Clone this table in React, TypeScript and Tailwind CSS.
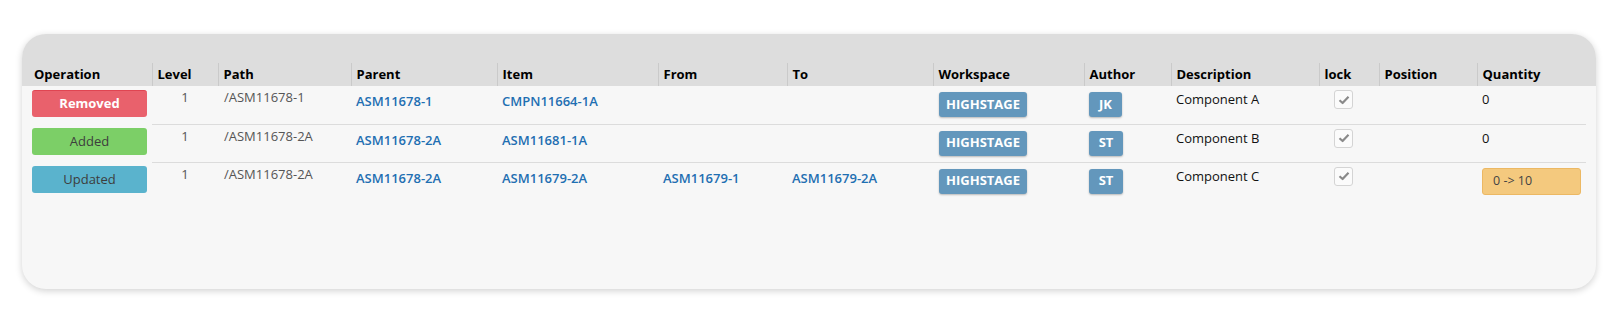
import React from "react";

type Row = {
  op: "Removed" | "Added" | "Updated";
  path: string;
  parent: string;
  item: string;
  from?: string;
  to?: string;
  author: string;
  description: string;
  quantity: string;
  changed?: boolean;
};

const rows: Row[] = [
  { op: "Removed", path: "/ASM11678-1", parent: "ASM11678-1", item: "CMPN11664-1A", author: "JK", description: "Component A", quantity: "0" },
  { op: "Added", path: "/ASM11678-2A", parent: "ASM11678-2A", item: "ASM11681-1A", author: "ST", description: "Component B", quantity: "0" },
  {
    op: "Updated",
    path: "/ASM11678-2A",
    parent: "ASM11678-2A",
    item: "ASM11679-2A",
    from: "ASM11679-1",
    to: "ASM11679-2A",
    author: "ST",
    description: "Component C",
    quantity: "0 -> 10",
    changed: true,
  },
];

const opStyles: Record<Row["op"], string> = {
  Removed: "bg-[#e9616c] border-t border-[#e04552] text-white font-bold",
  Added: "bg-[#7ccf67] text-[#3d3d3d]",
  Updated: "bg-[#5ab3cd] text-[#3d3d3d]",
};

const headers = [
  { label: "Operation", w: "w-[124px]", first: true },
  { label: "Level", w: "w-[66px]" },
  { label: "Path", w: "w-[133px]" },
  { label: "Parent", w: "w-[146px]" },
  { label: "Item", w: "w-[161px]" },
  { label: "From", w: "w-[129px]" },
  { label: "To", w: "w-[146px]" },
  { label: "Workspace", w: "w-[151px]" },
  { label: "Author", w: "w-[87px]" },
  { label: "Description", w: "w-[148px]" },
  { label: "lock", w: "w-[60px]" },
  { label: "Position", w: "w-[98px]" },
  { label: "Quantity", w: "w-[109px]" },
];

function Check() {
  return (
    <div className="w-[19px] h-[19px] rounded-[3px] border border-[#d4d4d4] bg-[#fbfbfb] flex items-center justify-center">
      <svg width="12" height="10" viewBox="0 0 12 10">
        <path d="M1.5 5.2 L4.6 8 L10.5 1.8" fill="none" stroke="#8a8a8a" strokeWidth="2.2" strokeLinejoin="round" />
      </svg>
    </div>
  );
}

function Badge({ children, w }: { children: React.ReactNode; w: string }) {
  return (
    <div
      className={`${w} h-[25px] rounded-[3px] bg-[#6397bc] text-white font-bold text-[13px] flex items-center justify-center shadow-[0_1px_2px_rgba(0,0,0,0.25)]`}
    >
      {children}
    </div>
  );
}

export default function App() {
  return (
    <div className="w-[1614px] h-[334px] bg-white pt-[34px] pl-[22px] font-['Open_Sans','Noto_Sans',sans-serif] text-[13px]">
      <div className="w-[1574px] h-[255px] rounded-[24px] bg-[#f7f7f7] overflow-hidden shadow-[0_2px_7px_rgba(0,0,0,0.18)]">
        <div className="bg-[#dddddd] pt-[29px] pl-[6px]">
          <table className="table-fixed border-collapse w-[1558px]">
            <thead>
              <tr className="h-[23px]">
                {headers.map((h) => (
                  <th
                    key={h.label}
                    className={`${h.w} p-0 text-left align-top font-bold text-black leading-[22px] ${
                      h.first ? "pl-[6px]" : "pl-[5px] border-l border-[#cacaca]"
                    }`}
                  >
                    {h.label}
                  </th>
                ))}
              </tr>
            </thead>
          </table>
        </div>
        <div className="pl-[6px]">
          <table className="table-fixed border-collapse w-[1558px]">
            <colgroup>
              {headers.map((h) => (
                <col key={h.label} className={h.w} />
              ))}
            </colgroup>
            <tbody>
              {rows.map((r, i) => (
                <tr key={i} className="h-[38px] align-top">
                  <td className="p-0 pl-[4px] pt-[4px]">
                    <div className={`w-[115px] h-[27px] rounded-[3px] flex items-center justify-center text-[13px] ${opStyles[r.op]}`}>
                      {r.op}
                    </div>
                  </td>
                  <td className={`p-0 pt-[2px] text-center text-[#555] ${i > 0 ? "border-t border-[#dcdcdc]" : ""}`}>1</td>
                  <td className={`p-0 pt-[2px] pl-[6px] text-[#555] ${i > 0 ? "border-t border-[#dcdcdc]" : ""}`}>{r.path}</td>
                  <td className={`p-0 pt-[6px] pl-[5px] font-semibold text-[#1f6fb2] ${i > 0 ? "border-t border-[#dcdcdc]" : ""}`}>{r.parent}</td>
                  <td className={`p-0 pt-[6px] pl-[5px] font-semibold text-[#1f6fb2] ${i > 0 ? "border-t border-[#dcdcdc]" : ""}`}>{r.item}</td>
                  <td className={`p-0 pt-[6px] pl-[5px] font-semibold text-[#1f6fb2] ${i > 0 ? "border-t border-[#dcdcdc]" : ""}`}>{r.from}</td>
                  <td className={`p-0 pt-[6px] pl-[5px] font-semibold text-[#1f6fb2] ${i > 0 ? "border-t border-[#dcdcdc]" : ""}`}>{r.to}</td>
                  <td className={`p-0 pt-[6px] pl-[6px] ${i > 0 ? "border-t border-[#dcdcdc]" : ""}`}>
                    <Badge w="w-[88px]">HIGHSTAGE</Badge>
                  </td>
                  <td className={`p-0 pt-[6px] pl-[5px] ${i > 0 ? "border-t border-[#dcdcdc]" : ""}`}>
                    <Badge w={r.author === "JK" ? "w-[33px]" : "w-[34px]"}>{r.author}</Badge>
                  </td>
                  <td className={`p-0 pt-[4px] pl-[5px] text-[#111] ${i > 0 ? "border-t border-[#dcdcdc]" : ""}`}>{r.description}</td>
                  <td className={`p-0 pt-[4px] pl-[15px] ${i > 0 ? "border-t border-[#dcdcdc]" : ""}`}>
                    <Check />
                  </td>
                  <td className={`p-0 ${i > 0 ? "border-t border-[#dcdcdc]" : ""}`}></td>
                  <td className={`p-0 pl-[5px] ${r.changed ? "pt-[5px]" : "pt-[4px]"} ${i > 0 ? "border-t border-[#dcdcdc]" : ""}`}>
                    {r.changed ? (
                      <div className="w-[99px] h-[27px] rounded-[3px] bg-[#f4c97e] border border-[#ecb863] text-[#444] pl-[10px] flex items-center text-[12.5px]">
                        {r.quantity}
                      </div>
                    ) : (
                      <span className="text-[#111]">{r.quantity}</span>
                    )}
                  </td>
                </tr>
              ))}
            </tbody>
          </table>
        </div>
      </div>
    </div>
  );
}
